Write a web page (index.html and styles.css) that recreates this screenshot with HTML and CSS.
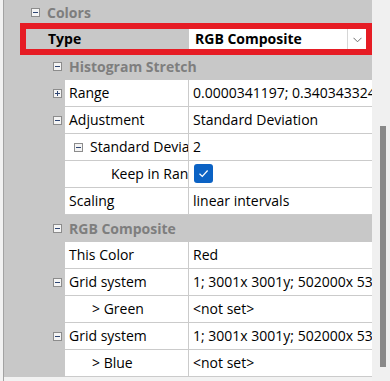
FILE: index.html
```html
<!DOCTYPE html>
<html lang="en">
<head>
<meta charset="UTF-8" />
<meta name="viewport" content="width=device-width, initial-scale=1" />
<title>Properties</title>
<link rel="stylesheet" href="styles.css">
</head>
<body>

<div class="window">
  <div class="grid">
    <div class="cat-row top">
      <span class="tog"><svg width="9" height="9" viewBox="0 0 9 9"><rect x="0.5" y="0.5" width="8" height="8" /><path d="M2 4.5h5" /></svg></span>
      <span class="cat-label">Colors</span>
    </div>

    <div class="row type-row">
      <div class="type-name">Type</div>
      <div class="value combo">
        <span class="combo-text">RGB Composite</span>
        <span class="combo-btn"><svg width="9" height="6" viewBox="0 0 9 6"><path d="M0.5 0.8l4 4 4-4" /></svg></span>
      </div>
    </div>

    <div class="cat-row sub">
      <span class="tog"><svg width="9" height="9" viewBox="0 0 9 9"><rect x="0.5" y="0.5" width="8" height="8" /><path d="M2 4.5h5" /></svg></span>
      <span class="cat-label">Histogram Stretch</span>
    </div>

    <div class="row">
      <div class="gutter"><span class="tog"><svg width="9" height="9" viewBox="0 0 9 9"><rect x="0.5" y="0.5" width="8" height="8" /><path d="M2 4.5h5M4.5 2v5" /></svg></span></div>
      <div class="name">Range</div>
      <div class="value">0.0000341197; 0.340343324</div>
    </div>
    <div class="row">
      <div class="gutter"><span class="tog"><svg width="9" height="9" viewBox="0 0 9 9"><rect x="0.5" y="0.5" width="8" height="8" /><path d="M2 4.5h5" /></svg></span></div>
      <div class="name">Adjustment</div>
      <div class="value">Standard Deviation</div>
    </div>
    <div class="row">
      <div class="gutter"></div>
      <div class="name lvl2"><span class="tog"><svg width="9" height="9" viewBox="0 0 9 9"><rect x="0.5" y="0.5" width="8" height="8" /><path d="M2 4.5h5" /></svg></span>Standard Deviation</div>
      <div class="value">2</div>
    </div>
    <div class="row">
      <div class="gutter"></div>
      <div class="name lvl3">Keep in Range</div>
      <div class="value"><span class="check"><svg width="11" height="9" viewBox="0 0 11 9"><path d="M1.5 4.8l2.8 2.7 5.3-6" /></svg></span></div>
    </div>
    <div class="row">
      <div class="gutter"></div>
      <div class="name">Scaling</div>
      <div class="value">linear intervals</div>
    </div>

    <div class="cat-row sub">
      <span class="tog"><svg width="9" height="9" viewBox="0 0 9 9"><rect x="0.5" y="0.5" width="8" height="8" /><path d="M2 4.5h5" /></svg></span>
      <span class="cat-label">RGB Composite</span>
    </div>

    <div class="row">
      <div class="gutter"></div>
      <div class="name">This Color</div>
      <div class="value">Red</div>
    </div>
    <div class="row">
      <div class="gutter"><span class="tog"><svg width="9" height="9" viewBox="0 0 9 9"><rect x="0.5" y="0.5" width="8" height="8" /><path d="M2 4.5h5" /></svg></span></div>
      <div class="name">Grid system</div>
      <div class="value">1; 3001x 3001y; 502000x 5340000y</div>
    </div>
    <div class="row">
      <div class="gutter"></div>
      <div class="name child">&gt; Green</div>
      <div class="value">&lt;not set&gt;</div>
    </div>
    <div class="row">
      <div class="gutter"><span class="tog"><svg width="9" height="9" viewBox="0 0 9 9"><rect x="0.5" y="0.5" width="8" height="8" /><path d="M2 4.5h5" /></svg></span></div>
      <div class="name">Grid system</div>
      <div class="value">1; 3001x 3001y; 502000x 5340000y</div>
    </div>
    <div class="row">
      <div class="gutter"></div>
      <div class="name child">&gt; Blue</div>
      <div class="value">&lt;not set&gt;</div>
    </div>
  </div>

  <div class="scrollbar"><div class="thumb"></div></div>

  <!-- red annotation box around the Type row -->
  <div class="highlight"></div>
</div>

</body>
</html>
```

FILE: styles.css
```css
* {
  box-sizing: border-box;
}
body {
  margin: 0;
  background: #f2f2f2;
  font-family: 'Open Sans', 'Noto Sans', sans-serif;
  font-size: 14px;
  color: #000;
}
.window {
  position: relative;
  width: 390px;
  height: 381px;
  overflow: hidden;
  display: flex;
  align-items: flex-start;
}
.grid {
  margin-left: 3px;
  width: 369px;
  height: 381px;
  border-left: 1px solid #a3a3a3;
}
.grid > div:first-child {
  margin-top: -1px;
}
.row {
  display: grid;
  grid-template-columns: 61px 124px 183px;
  height: 27px;
  line-height: 26px;
}
.gutter {
  background: #c8c8c8;
  display: flex;
  align-items: center;
  justify-content: flex-end;
  padding-right: 3px;
}
.name,
.value {
  background: #fff;
  border-bottom: 1px solid #cbcbcb;
  white-space: nowrap;
  overflow: hidden;
}
.name {
  border-right: 1px solid #cbcbcb;
  padding-left: 4px;
  display: flex;
  align-items: center;
}
.name.lvl2 {
  padding-left: 9px;
}
.name.lvl2 .tog {
  margin-right: 7px;
}
.name.lvl3 {
  padding-left: 46px;
}
.name.child {
  padding-left: 27px;
}
.value {
  padding-left: 4px;
}
.tog {
  display: inline-flex;
  width: 9px;
  height: 9px;
  flex: none;
}
.tog rect {
  fill: #f4f4f4;
  stroke: #8c8c8c;
}
.tog path {
  stroke: #2f4673;
  stroke-width: 1;
}
.cat-row {
  display: flex;
  align-items: center;
  height: 27px;
  background: #c8c8c8;
  font-weight: 700;
  color: #7e7e7e;
}
.cat-row .tog {
  margin-right: 7px;
}
.cat-row.top {
  padding-left: 27px;
}
.cat-row.sub {
  padding-left: 49px;
}
.type-row {
  grid-template-columns: 185px 183px;
}
.type-name {
  background: #c8c8c8;
  font-weight: 700;
  padding-left: 44px;
}
.combo {
  display: flex;
  justify-content: space-between;
  padding-left: 6px;
  border-bottom: none;
}
.combo-text {
  font-weight: 700;
}
.combo-btn {
  width: 20px;
  margin-right: 5px;
  border-left: 1px solid #d6d6d6;
  display: flex;
  align-items: center;
  justify-content: center;
}
.combo-btn path {
  fill: none;
  stroke: #6e6e6e;
  stroke-width: 1;
}
.check {
  display: inline-flex;
  align-items: center;
  justify-content: center;
  width: 19px;
  height: 19px;
  margin-left: 1px;
  margin-top: 3px;
  vertical-align: top;
  border-radius: 3px;
  background: #0b62c4;
}
.check path {
  fill: none;
  stroke: #fff;
  stroke-width: 1.2;
}
.scrollbar {
  width: 18px;
  height: 381px;
  background: #f0f0f0;
}
.thumb {
  margin: 126px 0 0 8px;
  width: 6px;
  height: 241px;
  background: #898989;
}
.highlight {
  position: absolute;
  left: 20px;
  top: 23px;
  width: 352px;
  height: 32px;
  border: 6px solid #e61c24;
}
```
